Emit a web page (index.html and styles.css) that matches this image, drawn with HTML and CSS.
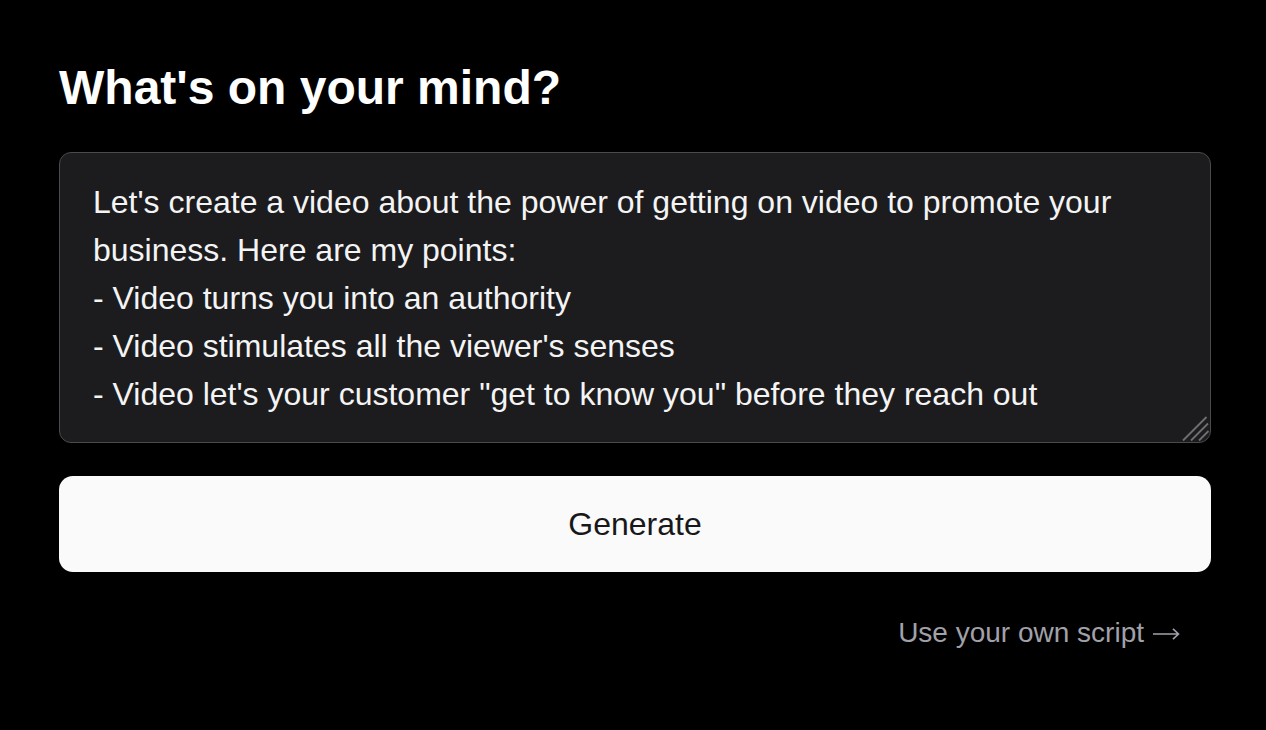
FILE: index.html
```html
<!DOCTYPE html>
<html lang="en">
<head>
<meta charset="utf-8">
<title>What's on your mind?</title>
<link rel="stylesheet" href="styles.css">
</head>
<body>
<main class="page">
  <h1 class="title">What's on your mind?</h1>
  <div class="prompt-wrap">
    <textarea class="prompt" rows="5">Let's create a video about the power of getting on video to promote your business. Here are my points:
- Video turns you into an authority
- Video stimulates all the viewer's senses
- Video let's your customer "get to know you" before they reach out</textarea>
    <svg class="grip" width="30" height="30" viewBox="0 0 30 30" aria-hidden="true">
      <path d="M2 27.5 L25.5 4 M10 27.5 L27 10.5 M18 27.5 L27.5 18" stroke="#6e6e73" stroke-width="1.8" fill="none"/>
    </svg>
  </div>
  <button class="generate" type="button">Generate</button>
  <div class="footer">
    <a class="own-script" href="#">Use your own script <svg class="arrow" width="28" height="14" viewBox="0 0 28 14" aria-hidden="true"><path d="M1 7 H26.5 M21 1.8 L26.5 7 L21 12.2" stroke="#a1a1aa" stroke-width="1.6" fill="none"/></svg></a>
  </div>
</main>
</body>
</html>
```

FILE: styles.css
```css
html, body {
  margin: 0;
  background: #000;
  color: #fff;
  font-family: "Liberation Sans", Arial, sans-serif;
}
.page {
  padding: 58px 55px 0 59px;
  display: flex;
  flex-direction: column;
}
.title {
  margin: 0 0 34px 0;
  font-size: 48px;
  line-height: 60px;
  font-weight: 700;
}
.prompt-wrap {
  position: relative;
  display: flex;
}
.prompt {
  box-sizing: border-box;
  width: 100%;
  height: 291px;
  padding: 25px 32px 24px 33px;
  background: #1c1c1e;
  color: #f4f4f5;
  border: 1px solid #4a4a4f;
  border-radius: 12px;
  font-family: "Liberation Sans", Arial, sans-serif;
  font-size: 32px;
  line-height: 48px;
  resize: none;
  outline: none;
  overflow: hidden;
}
.grip {
  position: absolute;
  right: 0;
  bottom: 0;
  pointer-events: none;
}
.generate {
  margin-top: 33px;
  height: 96px;
  width: 100%;
  border: none;
  border-radius: 14px;
  background: #fafafa;
  color: #18181b;
  font-family: "Liberation Sans", Arial, sans-serif;
  font-size: 32px;
  cursor: pointer;
}
.footer {
  display: flex;
  justify-content: flex-end;
  padding: 39px 31px 0 0;
}
.own-script {
  display: flex;
  align-items: center;
  gap: 8px;
  color: #a1a1aa;
  text-decoration: none;
  font-size: 28px;
  line-height: 44px;
}
.arrow {
  margin-top: 1px;
}
```
